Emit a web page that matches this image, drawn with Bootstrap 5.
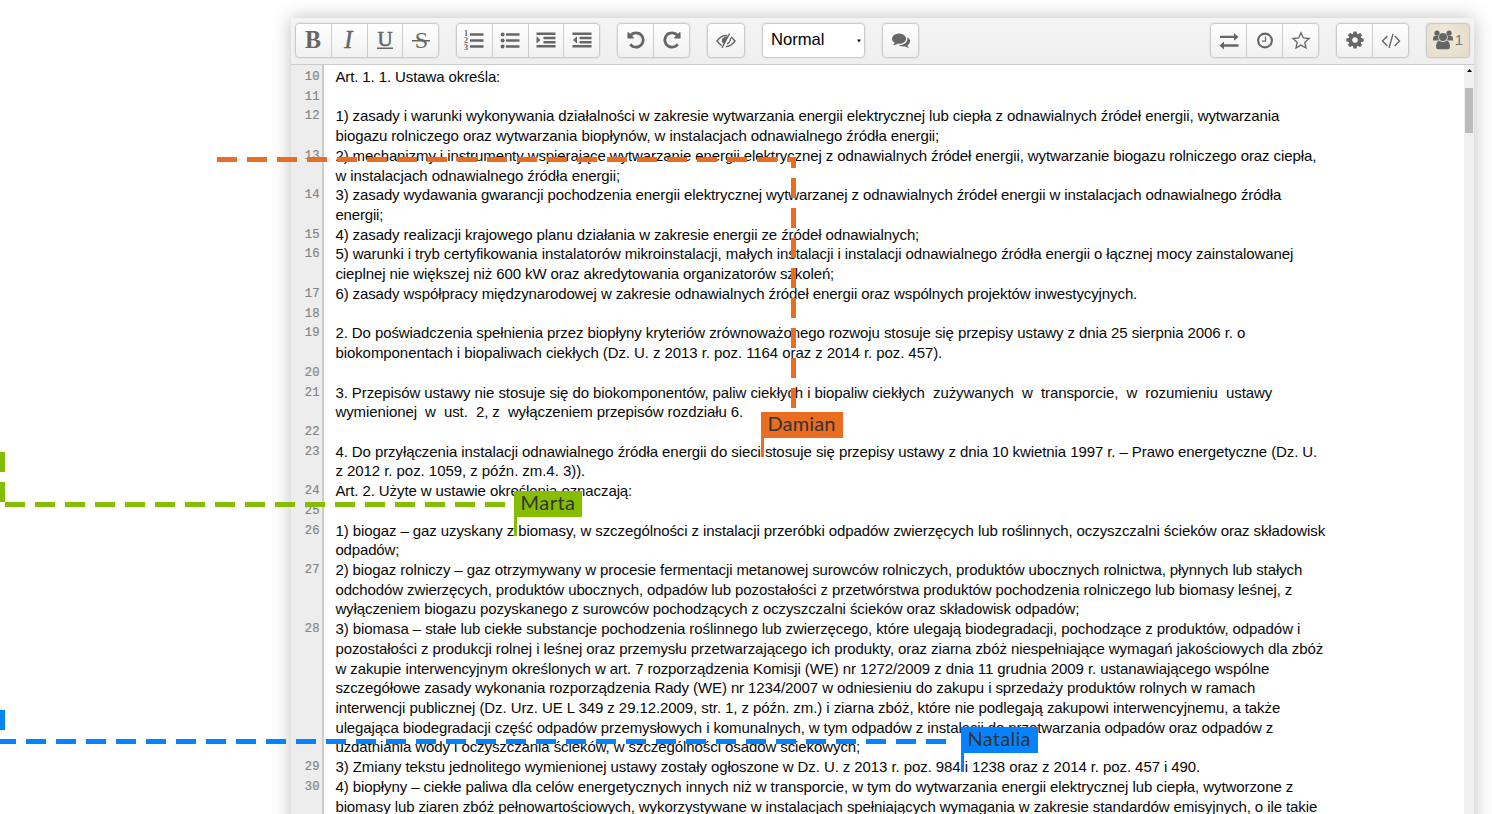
<!DOCTYPE html>
<html lang="pl">
<head>
<meta charset="utf-8">
<title>Edytor</title>
<link href="https://cdn.jsdelivr.net/npm/bootstrap@5.3.0/dist/css/bootstrap.min.css" rel="stylesheet">
<style>
body{width:1492px;height:814px;overflow:hidden;background:#fff;font-family:"Liberation Sans",Arial,sans-serif}
.stage{width:1492px;height:814px}
.editor{width:1183px;height:840px;margin:18px 0 0 291px;box-shadow:0 0 18px rgba(0,0,0,.25)}
.toolbar{height:47px;padding:5px 4px;gap:17px;background:linear-gradient(#f4f4f4,#efefef);border-bottom:1px solid #ccc}
.tools{height:35px;border:1px solid #ccc;border-radius:4px;background:linear-gradient(#fff,#f1f1f1);outline:1px solid rgba(190,190,190,.2);overflow:hidden}
.tools .btn{flex:1 1 0;padding:0 0 1px 0;border:0;border-radius:0;display:flex;align-items:center;justify-content:center;color:#666;line-height:1}
.tools .btn+.btn{border-left:1px solid #ccc}
.w4{width:144px}.w3{width:109px}.w2{width:73px}.w1{width:37px}
.tools svg{width:20px;height:20px;overflow:visible;fill:#666;display:block}
.tools svg text{font-family:"Liberation Serif",serif}
.tools.style-select{width:103px;background:#fff;color:#000;padding:0 3px 0 8px}
.style-select span{font-size:16.6px}
.tools.style-select svg{width:4px;height:4px;fill:#111}
.people{width:44px;padding-bottom:1px;background:radial-gradient(circle at 40% 40%,#f0ebdf,#e3dac4)}
.people span{font-size:15px;color:#777;margin-left:2px}
.gutter{width:33px;background:#ededed;border-right:2px solid #ccc}
.pane{height:793px;overflow:hidden;background:#fff}
.page-text{padding-top:2px}
.text-row{height:19.73px;line-height:20px;white-space:pre}
.num{width:33px;padding-right:4.5px;font:12.2px/20.6px "Liberation Mono",monospace;color:#858585;-webkit-text-stroke:.2px #858585;text-align:right}
.txt{margin-left:11.4px;font-size:15px;color:#080808}
.scroller{width:10px;background:#f0f0f0;padding:4px 1px 0}
.scroller svg{width:5px;height:3px;display:block;margin:0 auto 16px}
.thumb{height:45px;background:#bcbcbc}
.overlay{left:0;top:0;width:1492px;height:814px;pointer-events:none}
.overlay text{font-family:Lato,sans-serif;font-size:20px;fill:#333}
</style>
</head>
<body>
<div class="stage position-relative overflow-hidden d-flex">
<main class="editor d-flex flex-column">
  <header class="toolbar d-flex align-items-start flex-shrink-0">
    <div class="tools w4 d-flex">
      <button class="btn"><svg viewBox="0 0 20 20"><text x="2" y="18" font-size="24.500" font-weight="bold" textLength="16" lengthAdjust="spacingAndGlyphs">B</text></svg></button>
      <button class="btn"><svg viewBox="0 0 20 20"><text x="5.300" y="18" font-size="24.500" font-style="italic" stroke="#666" stroke-width=".5">I</text></svg></button>
      <button class="btn"><svg viewBox="0 0 20 20"><text x="2.500" y="15.600" font-size="21" stroke="#666" stroke-width=".6">U</text><path d="M2 17.500h16v1.500H2z"/></svg></button>
      <button class="btn"><svg viewBox="0 0 20 20"><text x="3.700" y="18" font-size="24">S</text><path d="M1 10h18v1.400H1z"/></svg></button>
    </div>
    <div class="tools w4 d-flex">
      <button class="btn"><svg viewBox="0 0 20 20"><g font-size="8" font-weight="bold"><text x="0" y="6.300">1</text><text x="0" y="13.100">2</text><text x="0" y="19.900">3</text></g><path d="M6 3.300h13.500v2.500H6zM6 9.300h13.500v2.500H6zM6 15.300h13.500v2.500H6z"/></svg></button>
      <button class="btn"><svg viewBox="0 0 20 20"><circle cx="2.600" cy="4.500" r="2"/><circle cx="2.600" cy="10.500" r="2"/><circle cx="2.600" cy="16.500" r="2"/><path d="M6 3.300h13.500v2.500H6zM6 9.300h13.500v2.500H6zM6 15.300h13.500v2.500H6z"/></svg></button>
      <button class="btn"><svg viewBox="0 0 20 20"><path d="M.5 2.500h19v2.500H.5zM7.500 6.700h12v2.500h-12zM7.500 10.900h12v2.500h-12zM.5 15.100h19v2.500H.5zM.5 6.200v7.400l4-3.700z"/></svg></button>
      <button class="btn"><svg viewBox="0 0 20 20"><path d="M.5 2.500h19v2.500H.5zM7.500 6.700h12v2.500h-12zM7.500 10.900h12v2.500h-12zM.5 15.100h19v2.500H.5zM5 6.200v7.400l-4-3.700z"/></svg></button>
    </div>
    <div class="tools w2 d-flex">
      <button class="btn"><svg viewBox="0 0 1792 1792"><path id="undo" d="M1664 896q0 156-61 298t-164 245-245 164-298 61q-172 0-327-72.500t-264-204.500q-7-10-6.500-22.500t8.500-20.500l137-138q10-9 25-9 16 2 23 12 73 95 179 147t225 52q104 0 198.500-40.500t163.500-109.500 109.500-163.500 40.500-198.500-40.500-198.500-109.500-163.500-163.500-109.500-198.500-40.500q-98 0-188 35.500t-160 101.500l137 138q31 30 14 69-17 40-59 40h-448q-26 0-45-19t-19-45v-448q0-42 40-59 39-17 69 14l130 129q107-101 244.500-156.500t284.500-55.500q156 0 298 61t245 164 164 245 61 298z"/></svg></button>
      <button class="btn"><svg viewBox="0 0 1792 1792"><use href="#undo" transform="translate(1792 0) scale(-1 1)"/></svg></button>
    </div>
    <div class="tools d-flex" style="width:38px">
      <button class="btn"><svg viewBox="0 0 20 20"><path d="M1 11Q5 5.500 10 5.500t9 5.500Q15 16.500 10 16.500T1 11z" fill="none" stroke="#666" stroke-width="1.400"/><path d="M14.500 3.500 6.800 18" stroke="#f8f8f8" stroke-width="4"/><path d="M13.500 3.500 6 18" stroke="#666" stroke-width="1.400"/><path d="M12 6.300 8 14Q5 12 6 9 8 6 12 6.300z"/><path d="M14.500 8q.3 4-3.500 6" fill="none" stroke="#666" stroke-width="1.300"/></svg></button>
    </div>
    <div class="tools style-select d-flex align-items-center justify-content-between"><span>Normal</span><svg viewBox="0 0 5 4"><path d="M0 0h5L2.500 4z"/></svg></div>
    <div class="tools w1 d-flex">
      <button class="btn"><svg style="width:18px" viewBox="0 0 1792 1792"><path d="M1408 768q0 139-94 257t-256.500 186.500-353.500 68.500q-86 0-176-16-124 88-278 128-36 9-86 16h-3q-11 0-20.500-8t-11.500-21q-1-3-1-6.500t.5-6.500 2-6l2.500-5 3.500-5.500 4-5 4.500-5 4-4.500q5-6 23-25t26-29.500 22.500-29 25-38.500 20.500-44q-124-72-195-177t-71-224q0-139 94-257t256.500-186.500 353.500-68.500 353.500 68.500 256.500 186.500 94 257zm384 256q0 120-71 224.500t-195 176.500q10 24 20.500 44t25 38.500 22.500 29 26 29.500 23 25q1 1 4 4.500t4.500 5 4 5 3.500 5.500l2.500 5 2 6 .5 6.500-1 6.500q-3 14-13 22t-22 7q-50-7-86-16-154-40-278-128-90 16-176 16-271 0-472-132 58 4 88 4 161 0 309-45t264-129q125-92 192-212t67-254q0-77-23-152 129 71 204 178t75 230z"/></svg></button>
    </div>
    <div class="tools w3 d-flex ms-auto">
      <button class="btn"><svg viewBox="0 0 20 20"><path d="M1 5.700h14V3l4.500 3.900-4.500 3.900V8.100H1zM19.500 14.300H5v-2.700L.5 15.500 5 19.400v-2.700h14.500z"/></svg></button>
      <button class="btn"><svg viewBox="0 0 20 20"><circle cx="10" cy="10.500" r="6.900" fill="none" stroke="#666" stroke-width="2.100"/><path d="M10.500 6.500v4.700H7" fill="none" stroke="#666" stroke-width="1.200"/></svg></button>
      <button class="btn"><svg viewBox="0 0 20 20"><path d="m10 2.800 2.300 5.200 5.700.6-4.200 3.800 1.200 5.600-5-2.900L5 18l1.200-5.600L2 8.600 7.700 8z" fill="none" stroke="#666" stroke-width="1.300"/></svg></button>
    </div>
    <div class="tools w2 d-flex">
      <button class="btn"><svg viewBox="0 0 1792 1792"><path d="M1152 896q0-106-75-181t-181-75-181 75-75 181 75 181 181 75 181-75 75-181zm512-109v222q0 12-8 23t-20 13l-185 28q-19 54-39 91 35 50 107 138 10 12 10 25t-9 23q-27 37-99 108t-94 71q-12 0-26-9l-138-108q-44 23-91 38-16 136-29 186-7 28-36 28h-222q-14 0-24.500-8.500t-11.500-21.500l-28-184q-49-16-90-37l-141 107q-10 9-25 9-14 0-25-11-126-114-165-168-7-10-7-23 0-12 8-23 15-21 51-66.500t54-70.500q-27-50-41-99l-183-27q-13-2-21-12.500t-8-23.500v-222q0-12 8-23t19-13l186-28q14-46 39-92-40-57-107-138-10-12-10-24 0-10 9-23 26-36 98.500-107.500t94.500-71.500q13 0 26 10l138 107q44-23 91-38 16-136 29-186 7-28 36-28h222q14 0 24.500 8.500t11.500 21.500l28 184q49 16 90 37l142-107q9-9 24-9 13 0 25 10 129 119 165 170 7 8 7 22 0 12-8 23-15 21-51 66.500t-54 70.500q26 50 41 98l183 28q13 2 21 12.500t8 23.500z"/></svg></button>
      <button class="btn"><svg viewBox="0 0 20 20"><path d="M6.300 6 1.500 11l4.800 5M13.700 6l4.800 5-4.800 5M12 4 8 18" fill="none" stroke="#666" stroke-width="1.400"/></svg></button>
    </div>
    <div class="tools people d-flex align-items-center justify-content-center">
      <svg viewBox="0 0 20 20"><circle cx="4" cy="3.200" r="2.600"/><circle cx="16" cy="3.200" r="2.600"/><path d="M0 10.500V8.200Q0 6 2 6h3.500q-.8 2.500.5 4.500zM20 10.500V8.200Q20 6 18 6h-3.500q.8 2.500-.5 4.500z"/><circle cx="10" cy="7" r="4"/><path d="M3 17q0-6 3.500-6.300 3.500 2.400 7 0Q17 11 17 17q0 2.300-2.300 2.300H5.300Q3 19.300 3 17z"/></svg><span>1</span>
    </div>
  </header>
  <section class="pane d-flex position-relative">
    <div class="gutter position-absolute h-100"></div>
    <div class="page-text flex-grow-1 position-relative" id="lines"></div>
    <aside class="scroller"><svg viewBox="0 0 5 3"><path d="M0 3h5L2.500 0z"/></svg><div class="thumb"></div></aside>
  </section>
</main>
<svg class="overlay position-absolute" viewBox="0 0 1492 814">
  <g fill="none" stroke-width="5" stroke-dasharray="20 10">
    <path stroke="#eb6d20" d="M217 159.500H796"/><path stroke="#eb6d20" stroke-dashoffset="9" d="M793.500 157V408"/>
    <path stroke="#86bd00" d="M2.500 452V502"/><path stroke="#86bd00" d="M5 504.500H505"/>
    <path stroke="#0583ff" d="M2.500 710V730"/><path stroke="#0583ff" stroke-dashoffset="4" d="M0 741.500H946"/>
  </g>
  <path fill="#eb6d20" d="M761 412h82v26h-79v19h-3z"/><text x="767.500" y="431" textLength="68">Damian</text>
  <path fill="#86bd00" d="M514 491h68v26h-65v19h-3z"/><text x="520.500" y="510" textLength="54.500">Marta</text>
  <path fill="#0583ff" d="M961 727h77v26h-74v19h-3z"/><text x="967.500" y="746" textLength="63">Natalia</text>
</svg>
</div>
<script>
// [line number, text, right edge of the line]
const LINES = [
["10","Art. 1. 1. Ustawa określa:",500],
["11","",0],
["12","1) zasady i warunki wykonywania działalności w zakresie wytwarzania energii elektrycznej lub ciepła z odnawialnych źródeł energii, wytwarzania",1279],
["","biogazu rolniczego oraz wytwarzania biopłynów, w instalacjach odnawialnego źródła energii;",939],
["13","2) mechanizmy i instrumenty wspierające wytwarzanie energii elektrycznej z odnawialnych źródeł energii, wytwarzanie biogazu rolniczego oraz ciepła,",1316],
["","w instalacjach odnawialnego źródła energii;",620],
["14","3) zasady wydawania gwarancji pochodzenia energii elektrycznej wytwarzanej z odnawialnych źródeł energii w instalacjach odnawialnego źródła",1281],
["","energii;",383],
["15","4) zasady realizacji krajowego planu działania w zakresie energii ze źródeł odnawialnych;",919],
["16","5) warunki i tryb certyfikowania instalatorów mikroinstalacji, małych instalacji i instalacji odnawialnego źródła energii o łącznej mocy zainstalowanej",1293],
["","cieplnej nie większej niż 600 kW oraz akredytowania organizatorów szkoleń;",834],
["17","6) zasady współpracy międzynarodowej w zakresie odnawialnych źródeł energii oraz wspólnych projektów inwestycyjnych.",1137],
["18","",0],
["19","2. Do poświadczenia spełnienia przez biopłyny kryteriów zrównoważonego rozwoju stosuje się przepisy ustawy z dnia 25 sierpnia 2006 r. o",1245],
["","biokomponentach i biopaliwach ciekłych (Dz. U. z 2013 r. poz. 1164 oraz z 2014 r. poz. 457).",942],
["20","",0],
["21","3. Przepisów ustawy nie stosuje się do biokomponentów, paliw ciekłych i biopaliw ciekłych  zużywanych  w  transporcie,  w  rozumieniu  ustawy",1272],
["","wymienionej  w  ust.  2, z  wyłączeniem przepisów rozdziału 6.",743],
["22","",0],
["23","4. Do przyłączenia instalacji odnawialnego źródła energii do sieci stosuje się przepisy ustawy z dnia 10 kwietnia 1997 r. – Prawo energetyczne (Dz. U.",1317],
["","z 2012 r. poz. 1059, z późn. zm.4. 3)).",585],
["24","Art. 2. Użyte w ustawie określenia oznaczają:",632],
["25","",0],
["26","1) biogaz – gaz uzyskany z biomasy, w szczególności z instalacji przeróbki odpadów zwierzęcych lub roślinnych, oczyszczalni ścieków oraz składowisk",1325],
["","odpadów;",399],
["27","2) biogaz rolniczy – gaz otrzymywany w procesie fermentacji metanowej surowców rolniczych, produktów ubocznych rolnictwa, płynnych lub stałych",1302],
["","odchodów zwierzęcych, produktów ubocznych, odpadów lub pozostałości z przetwórstwa produktów pochodzenia rolniczego lub biomasy leśnej, z",1292],
["","wyłączeniem biogazu pozyskanego z surowców pochodzących z oczyszczalni ścieków oraz składowisk odpadów;",1079],
["28","3) biomasa – stałe lub ciekłe substancje pochodzenia roślinnego lub zwierzęcego, które ulegają biodegradacji, pochodzące z produktów, odpadów i",1300],
["","pozostałości z produkcji rolnej i leśnej oraz przemysłu przetwarzającego ich produkty, oraz ziarna zbóż niespełniające wymagań jakościowych dla zbóż",1323],
["","w zakupie interwencyjnym określonych w art. 7 rozporządzenia Komisji (WE) nr 1272/2009 z dnia 11 grudnia 2009 r. ustanawiającego wspólne",1269],
["","szczegółowe zasady wykonania rozporządzenia Rady (WE) nr 1234/2007 w odniesieniu do zakupu i sprzedaży produktów rolnych w ramach",1255],
["","interwencji publicznej (Dz. Urz. UE L 349 z 29.12.2009, str. 1, z późn. zm.) i ziarna zbóż, które nie podlegają zakupowi interwencyjnemu, a także",1280],
["","ulegająca biodegradacji część odpadów przemysłowych i komunalnych, w tym odpadów z instalacji do przetwarzania odpadów oraz odpadów z",1273],
["","uzdatniania wody i oczyszczania ścieków, w szczególności osadów ściekowych;",860],
["29","3) Zmiany tekstu jednolitego wymienionej ustawy zostały ogłoszone w Dz. U. z 2013 r. poz. 984 i 1238 oraz z 2014 r. poz. 457 i 490.",1200],
["30","4) biopłyny – ciekłe paliwa dla celów energetycznych innych niż w transporcie, w tym do wytwarzania energii elektrycznej lub ciepła, wytworzone z",1293],
["","biomasy lub ziaren zbóż pełnowartościowych, wykorzystywane w instalacjach spełniających wymagania w zakresie standardów emisyjnych, o ile takie",1317]
];
const host = document.getElementById("lines");
for (const [n, t, right] of LINES) {
  const row = document.createElement("div");
  row.className = "text-row d-flex";
  const num = document.createElement("span");
  num.className = "num";
  num.textContent = n;
  const txt = document.createElement("span");
  txt.className = "txt";
  txt.textContent = t;
  row.append(num, txt);
  host.append(row);
  if (t) {
    const box = txt.getBoundingClientRect();
    txt.style.letterSpacing = ((right + 0.2 - box.left - box.width) / t.length).toFixed(4) + "px";
  }
}
</script>
<script src="https://cdn.jsdelivr.net/npm/bootstrap@5.3.0/dist/js/bootstrap.bundle.min.js"></script>
</body>
</html>
